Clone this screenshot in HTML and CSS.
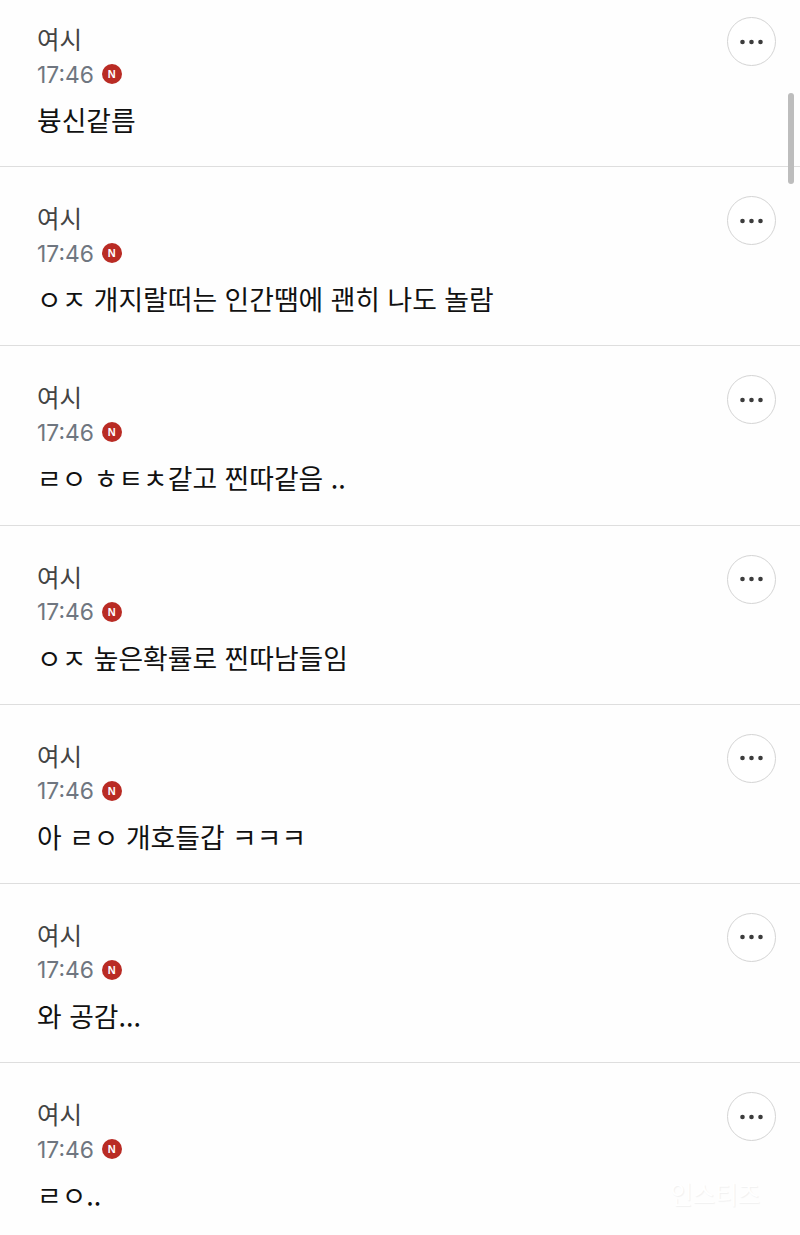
FILE: index.html
```html
<!DOCTYPE html>
<html lang="ko">
<head>
<meta charset="utf-8">
<title>댓글</title>
<link rel="stylesheet" href="styles.css">
</head>
<body>
<main class="list">
  <article class="row"><div class="body"><div class="name">여시</div><div class="meta"><span class="time">17:46</span><span class="badge">N</span></div><p class="text">븅신같름</p></div><button class="more" aria-label="더보기"><svg width="23" height="6" viewBox="0 0 23 6"><circle cx="2.5" cy="3" r="2.3"/><circle cx="11.5" cy="3" r="2.3"/><circle cx="20.5" cy="3" r="2.3"/></svg></button></article>
  <article class="row"><div class="body"><div class="name">여시</div><div class="meta"><span class="time">17:46</span><span class="badge">N</span></div><p class="text">ㅇㅈ 개지랄떠는 인간땜에 괜히 나도 놀람</p></div><button class="more" aria-label="더보기"><svg width="23" height="6" viewBox="0 0 23 6"><circle cx="2.5" cy="3" r="2.3"/><circle cx="11.5" cy="3" r="2.3"/><circle cx="20.5" cy="3" r="2.3"/></svg></button></article>
  <article class="row"><div class="body"><div class="name">여시</div><div class="meta"><span class="time">17:46</span><span class="badge">N</span></div><p class="text">ㄹㅇ ㅎㅌㅊ같고 찐따같음 ..</p></div><button class="more" aria-label="더보기"><svg width="23" height="6" viewBox="0 0 23 6"><circle cx="2.5" cy="3" r="2.3"/><circle cx="11.5" cy="3" r="2.3"/><circle cx="20.5" cy="3" r="2.3"/></svg></button></article>
  <article class="row"><div class="body"><div class="name">여시</div><div class="meta"><span class="time">17:46</span><span class="badge">N</span></div><p class="text">ㅇㅈ 높은확률로 찐따남들임</p></div><button class="more" aria-label="더보기"><svg width="23" height="6" viewBox="0 0 23 6"><circle cx="2.5" cy="3" r="2.3"/><circle cx="11.5" cy="3" r="2.3"/><circle cx="20.5" cy="3" r="2.3"/></svg></button></article>
  <article class="row"><div class="body"><div class="name">여시</div><div class="meta"><span class="time">17:46</span><span class="badge">N</span></div><p class="text">아 ㄹㅇ 개호들갑 ㅋㅋㅋ</p></div><button class="more" aria-label="더보기"><svg width="23" height="6" viewBox="0 0 23 6"><circle cx="2.5" cy="3" r="2.3"/><circle cx="11.5" cy="3" r="2.3"/><circle cx="20.5" cy="3" r="2.3"/></svg></button></article>
  <article class="row"><div class="body"><div class="name">여시</div><div class="meta"><span class="time">17:46</span><span class="badge">N</span></div><p class="text">와 공감...</p></div><button class="more" aria-label="더보기"><svg width="23" height="6" viewBox="0 0 23 6"><circle cx="2.5" cy="3" r="2.3"/><circle cx="11.5" cy="3" r="2.3"/><circle cx="20.5" cy="3" r="2.3"/></svg></button></article>
  <article class="row"><div class="body"><div class="name">여시</div><div class="meta"><span class="time">17:46</span><span class="badge">N</span></div><p class="text">ㄹㅇ..</p></div><button class="more" aria-label="더보기"><svg width="23" height="6" viewBox="0 0 23 6"><circle cx="2.5" cy="3" r="2.3"/><circle cx="11.5" cy="3" r="2.3"/><circle cx="20.5" cy="3" r="2.3"/></svg></button></article>
</main>
<div class="scrollbar"></div>
<div class="watermark">인스티즈</div>
</body>
</html>
```
FILE: styles.css
```css
html, body {
  margin: 0;
  height: 100%;
  overflow: hidden;
  background: #fefefe;
}
body {
  position: relative;
  font-family: "Noto Sans CJK KR", "Noto Sans", sans-serif;
}
.list {
  margin-top: -12px;
}
.row {
  box-sizing: border-box;
  height: 179.2px;
  padding: 29px 24.3px 0 37px;
  display: flex;
  justify-content: space-between;
  align-items: flex-start;
  border-bottom: 1px solid #dedede;
}
.row:last-child {
  border-bottom: 0;
}
.body {
  min-width: 0;
  padding-top: 5px;
}
.name {
  font-size: 24.5px;
  line-height: 34px;
  color: #444;
}
.meta {
  display: flex;
  align-items: center;
  gap: 8px;
  height: 34px;
  margin-top: 1px;
}
.time {
  font-family: Inter, "Noto Sans", sans-serif;
  font-size: 22.8px;
  color: #6f7680;
}
.badge {
  width: 20px;
  height: 20px;
  border-radius: 50%;
  background: #b92b24;
  color: #fff;
  font-family: "Liberation Sans", sans-serif;
  font-size: 11px;
  font-weight: 700;
  line-height: 20px;
  text-align: center;
}
.text {
  margin: 10px 0 0;
  font-size: 26.8px;
  line-height: 38px;
  color: #111;
}
.more {
  width: 49px;
  height: 49px;
  padding: 0;
  flex: none;
  display: flex;
  align-items: center;
  justify-content: center;
  background: #fff;
  border: 1px solid #d4d4d4;
  border-radius: 50%;
}
.more svg {
  fill: #3c3c3c;
}
.scrollbar {
  position: absolute;
  left: 788px;
  top: 93px;
  width: 6px;
  height: 91px;
  border-radius: 3px;
  background: #bdbdbd;
}
.watermark {
  position: absolute;
  left: 670px;
  top: 1177px;
  font-size: 24.5px;
  line-height: 34px;
  color: #fff;
  text-shadow: 1px 1px 1px #f1f1f1;
}
```
